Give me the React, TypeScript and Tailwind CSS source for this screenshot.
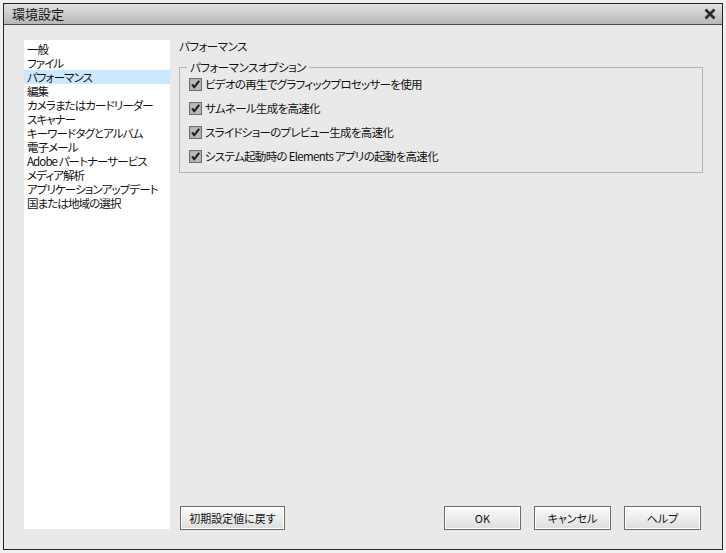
import React from 'react';

const font = { fontFamily: '"MS UI Gothic", "Noto Sans CJK JP", "Liberation Sans", sans-serif' };

const menuItems = [
    '一般',
    'ファイル',
    'パフォーマンス',
    '編集',
    'カメラまたはカードリーダー',
    'スキャナー',
    'キーワードタグとアルバム',
    '電子メール',
    'Adobe パートナーサービス',
    'メディア解析',
    'アプリケーションアップデート',
    '国または地域の選択',
];

const options = [
    'ビデオの再生でグラフィックプロセッサーを使用',
    'サムネール生成を高速化',
    'スライドショーのプレビュー生成を高速化',
    'システム起動時の Elements アプリの起動を高速化',
];

const CheckBox = () => (
    <svg width="13" height="13" viewBox="0 0 13 13" className="shrink-0">
        <rect x="0.5" y="0.5" width="12" height="12" fill="#a9a9a9" stroke="#6f6f6f" />
        <rect x="1.5" y="1.5" width="10" height="10" fill="#b9b9b9" />
        <path d="M3 6.5 L5.3 9.2 L10.2 2.8" fill="none" stroke="#1e1e1e" strokeWidth="2" />
    </svg>
);

const Button = ({ label, w }: { label: string; w: string }) => (
    <button
        className={`${w} h-[24px] border border-[#6e6e6e] bg-gradient-to-b from-[#fbfbfb] to-[#dedede] text-[11px] text-[#111] flex items-center justify-center shadow-[inset_0_0_0_1px_#ffffff]`}
    >
        {label}
    </button>
);

const App = () => {
    return (
        <div className="w-[726px] h-[553px] bg-[#f0f0f0] pl-[3px] pt-[3px] [font-feature-settings:'palt']" style={font}>
            <div className="w-[720px] h-[547px] border border-[#262626] flex flex-col bg-[#e9e9e9]">
                <div className="h-[21px] bg-gradient-to-b from-[#e2e2e2] to-[#b6b6b6] border-b border-[#4a4a4a] flex items-center justify-between pl-[8px] pr-[6px]">
                    <span className="text-[13px] text-[#111]">環境設定</span>
                    <svg width="12" height="12" viewBox="0 0 12 12">
                        <path d="M1.5 1.5 L10.5 10.5 M10.5 1.5 L1.5 10.5" stroke="#2a2a2a" strokeWidth="2.6" />
                    </svg>
                </div>
                <div className="flex-1 flex pl-[20px] pt-[15px] pb-[20px] pr-[19px] gap-[8px]">
                    <div className="w-[146px] bg-white pt-[2px] text-[11.5px] tracking-[-0.9px] text-[#111] leading-[14px]">
                        {menuItems.map((m, i) => (
                            <div key={m} className={`pl-[3px] h-[14px] whitespace-nowrap ${i === 2 ? 'bg-[#cce8ff]' : ''}`}>
                                {m}
                            </div>
                        ))}
                    </div>
                    <div className="flex-1 flex flex-col">
                        <div className="text-[11.5px] tracking-[-0.5px] text-[#111] leading-[14px] mt-[-1px] pl-[1px]">パフォーマンス</div>
                        <div className="relative mt-[14px] ml-[1px] border border-[#b4b4b4] h-[106px] pt-[10px] pl-[9px]">
                            <span className="absolute left-[7px] top-[-8px] bg-[#e9e9e9] px-[3px] text-[11.5px] tracking-[-0.5px] leading-[14px] text-[#111]">
                                パフォーマンスオプション
                            </span>
                            <div className="flex flex-col gap-[11px]">
                                {options.map((o) => (
                                    <div key={o} className="flex items-center gap-[3px] h-[13px] text-[11.5px] tracking-[-0.7px] text-[#111] whitespace-nowrap">
                                        <CheckBox />
                                        <span>{o}</span>
                                    </div>
                                ))}
                            </div>
                        </div>
                        <div className="flex-1" />
                        <div className="flex items-center pl-[2px] pr-[2px] mb-[-1px]">
                            <Button label="初期設定値に戻す" w="w-[105px]" />
                            <div className="flex-1" />
                            <div className="flex gap-[13px]">
                                <Button label="OK" w="w-[77px]" />
                                <Button label="キャンセル" w="w-[77px]" />
                                <Button label="ヘルプ" w="w-[77px]" />
                            </div>
                        </div>
                    </div>
                </div>
            </div>
        </div>
    );
};

export default App;
